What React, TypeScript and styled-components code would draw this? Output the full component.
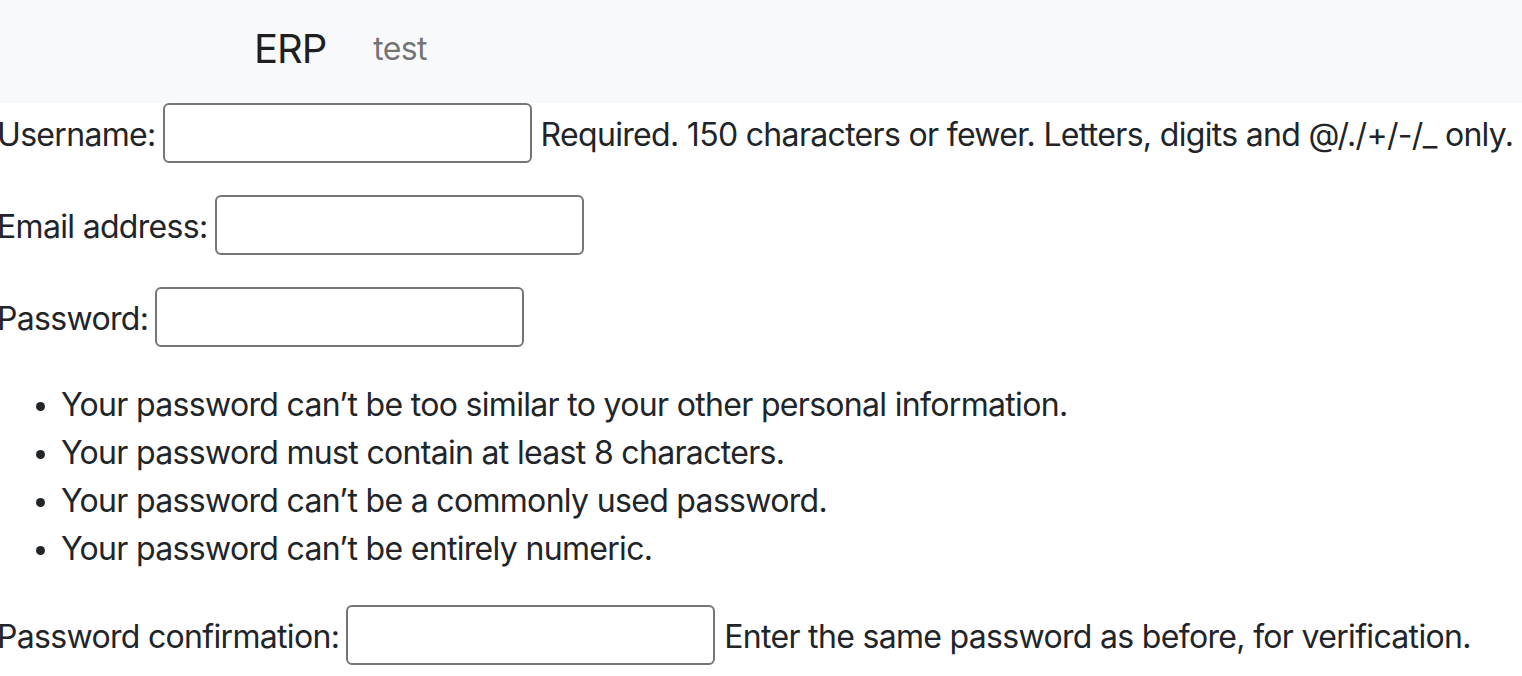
import React from 'react';
import styled, { createGlobalStyle } from 'styled-components';

const GlobalStyle = createGlobalStyle`
	html, body {
		margin: 0;
		padding: 0;
		background: #ffffff;
	}
	body {
		font-family: Inter, 'Liberation Sans', sans-serif;
		font-size: 32px;
		line-height: 1.5;
		letter-spacing: -0.68px;
		color: #212529;
		overflow: hidden;
	}
	* {
		box-sizing: border-box;
	}
`;

const Navbar = styled.nav`
	display: flex;
	align-items: center;
	height: 103px;
	padding-left: 254px;
	padding-bottom: 6px;
	gap: 47px;
	background: #f8f9fa;
`;

const Brand = styled.a`
	font-size: 40px;
	letter-spacing: -1px;
	color: rgba(0, 0, 0, 0.9);
	text-decoration: none;
`;

const NavLink = styled.a`
	font-size: 32px;
	color: rgba(0, 0, 0, 0.55);
	text-decoration: none;
`;

const Form = styled.form`
	margin-left: -3px;
`;

const Field = styled.p`
	display: flex;
	align-items: center;
	height: 60px;
	margin: 0 0 32px 0;
	white-space: nowrap;
`;

const Label = styled.label`
	margin-right: 7px;
	padding-top: 3px;
`;

const Input = styled.input`
	width: 369px;
	height: 60px;
	padding: 2px 4px;
	border: 2px solid #767676;
	border-radius: 6px;
	font: inherit;
`;

const HelpText = styled.span`
	margin-left: 9px;
	padding-top: 3px;
`;

const Rules = styled.ul`
	margin: 0 0 32px 0;
	padding: 2px 0 0 64px;
	height: 194px;
	li::marker {
		font-size: 28px;
	}
`;

const fields = [
	{ id: 'username', label: 'Username:', type: 'text', help: 'Required. 150 characters or fewer. Letters, digits and @/./+/-/_ only.' },
	{ id: 'email', label: 'Email address:', type: 'email' },
	{ id: 'password1', label: 'Password:', type: 'password' }
];

const rules = [
	'Your password can\u2019t be too similar to your other personal information.',
	'Your password must contain at least 8 characters.',
	'Your password can\u2019t be a commonly used password.',
	'Your password can\u2019t be entirely numeric.'
];

const App = () => {
	return (
		<>
			<GlobalStyle />
			<Navbar>
				<Brand href='#'>ERP</Brand>
				<NavLink href='#'>test</NavLink>
			</Navbar>
			<Form>
				{fields.map((field) => (
					<Field key={field.id}>
						<Label htmlFor={field.id}>{field.label}</Label>
						<Input id={field.id} type={field.type} />
						{field.help && <HelpText>{field.help}</HelpText>}
					</Field>
				))}
				<Rules>
					{rules.map((rule) => (
						<li key={rule}>{rule}</li>
					))}
				</Rules>
				<Field>
					<Label htmlFor='password2'>Password confirmation:</Label>
					<Input id='password2' type='password' />
					<HelpText>Enter the same password as before, for verification.</HelpText>
				</Field>
			</Form>
		</>
	);
};

export default App;
